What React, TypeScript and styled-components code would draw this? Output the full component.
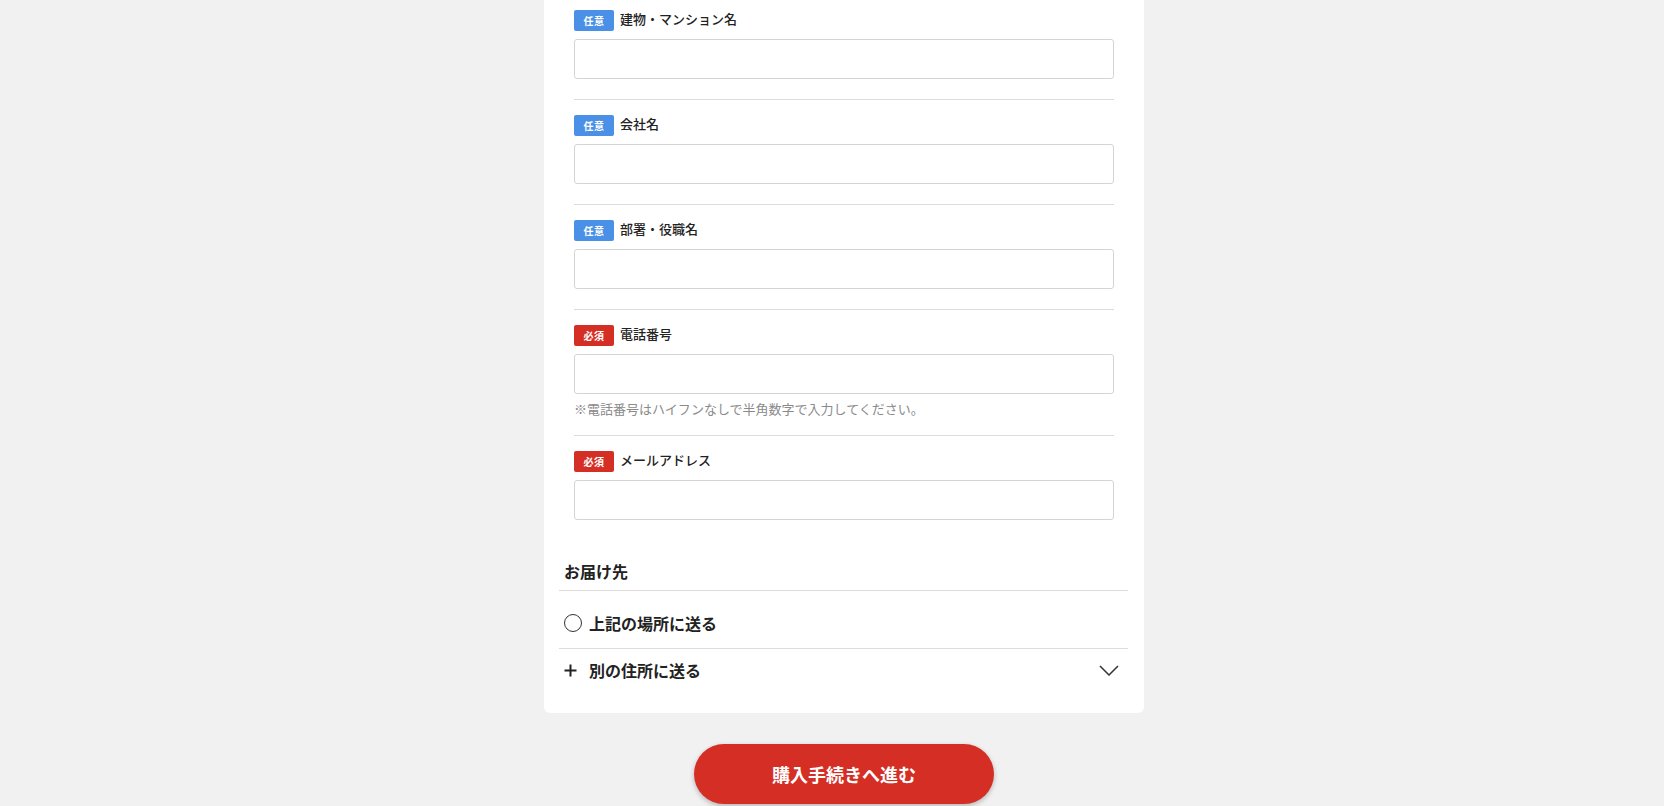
import styled, { createGlobalStyle } from 'styled-components';

const GlobalStyle = createGlobalStyle`
  html, body {
    margin: 0;
    padding: 0;
    background: #f1f1f1;
  }
  body {
    font-family: 'Noto Sans CJK JP', 'Noto Sans', sans-serif;
    color: #222;
  }
  * {
    box-sizing: border-box;
  }
`;

type Field = {
  label: string;
  required?: boolean;
  note?: string;
};

const fields: Field[] = [
  { label: '建物・マンション名' },
  { label: '会社名' },
  { label: '部署・役職名' },
  {
    label: '電話番号',
    required: true,
    note: '※電話番号はハイフンなしで半角数字で入力してください。',
  },
  { label: 'メールアドレス', required: true },
];

function App() {
  return (
    <Page>
      <GlobalStyle />
      <Card>
        {fields.map((f, i) => (
          <FieldRow key={f.label} $first={i === 0} $last={i === fields.length - 1}>
            <LabelLine>
              <Badge $required={f.required}>{f.required ? '必須' : '任意'}</Badge>
              <Label>{f.label}</Label>
            </LabelLine>
            <Input type='text' />
            {f.note && <Note>{f.note}</Note>}
          </FieldRow>
        ))}

        <Delivery>
          <DeliveryTitle>お届け先</DeliveryTitle>
          <Option $first>
            <IconBox>
              <Radio />
            </IconBox>
            <OptionText>上記の場所に送る</OptionText>
          </Option>
          <Option>
            <IconBox>
              <svg width='13' height='13' viewBox='0 0 13 13'>
                <path d='M6.5 0.5v12M0.5 6.5h12' stroke='#222' strokeWidth='2' />
              </svg>
            </IconBox>
            <OptionText>別の住所に送る</OptionText>
            <Chevron width='20' height='11' viewBox='0 0 20 11'>
              <path d='M1 1l9 9 9-9' fill='none' stroke='#333' strokeWidth='1.5' />
            </Chevron>
          </Option>
        </Delivery>
      </Card>

      <SubmitButton type='button'>購入手続きへ進む</SubmitButton>
    </Page>
  );
}

export default App;

const Page = styled.div`
  display: flex;
  flex-direction: column;
  align-items: center;
  padding-left: 24px;
  height: 806px;
  overflow: hidden;
`;

const Card = styled.div`
  width: 600px;
  background: #fff;
  border-radius: 0 0 6px 6px;
  padding: 0 0 22px;
`;

const FieldRow = styled.div<{ $first?: boolean; $last?: boolean }>`
  margin: 0 30px;
  padding: ${(p) => (p.$first ? '10px' : '15px')} 0 20px;
  border-bottom: ${(p) => (p.$last ? 'none' : '1px solid #dcdcdc')};
`;

const LabelLine = styled.div`
  display: flex;
  align-items: center;
  height: 21px;
  margin-bottom: 8px;
`;

const Badge = styled.span<{ $required?: boolean }>`
  display: inline-flex;
  align-items: center;
  justify-content: center;
  width: 40px;
  height: 21px;
  border-radius: 2px;
  background: ${(p) => (p.$required ? '#d42e25' : '#4a90e6')};
  color: #fff;
  font-size: 10px;
  font-weight: 700;
  letter-spacing: 0.5px;
`;

const Label = styled.span`
  margin-left: 6px;
  margin-top: -3px;
  font-size: 13px;
  font-weight: 500;
  line-height: 18px;
  color: #222;
`;

const Input = styled.input`
  display: block;
  width: 100%;
  height: 40px;
  border: 1px solid #d4d4d4;
  border-radius: 3px;
  background: #fff;
  padding: 0 10px;
  font-size: 14px;
  font-family: inherit;
  outline: none;
`;

const Note = styled.p`
  margin: 6px 0 -3px;
  font-size: 13px;
  line-height: 18px;
  color: #8a8a8a;
`;

const Delivery = styled.div`
  margin: 20px 16px 0 15px;
`;

const DeliveryTitle = styled.h3`
  margin: 0;
  padding: 0 5px 8px;
  font-size: 16px;
  font-weight: 700;
  line-height: 22px;
  border-bottom: 1px solid #dcdcdc;
`;

const Option = styled.div<{ $first?: boolean }>`
  display: flex;
  align-items: center;
  padding: ${(p) => (p.$first ? '21px 9px 14px 5px' : '10px 9px 10px 5px')};
  border-bottom: ${(p) => (p.$first ? '1px solid #dcdcdc' : 'none')};
`;

const IconBox = styled.span`
  display: inline-flex;
  align-items: center;
  justify-content: flex-start;
  width: 25px;
  height: 22px;
`;

const Radio = styled.span`
  display: block;
  width: 18px;
  height: 18px;
  border: 1.5px solid #333;
  border-radius: 50%;
`;

const OptionText = styled.span`
  font-size: 16px;
  font-weight: 700;
  line-height: 22px;
  color: #222;
  flex: 1;
`;

const Chevron = styled.svg`
  display: block;
`;

const SubmitButton = styled.button`
  margin-top: 31px;
  width: 300px;
  height: 60px;
  flex-shrink: 0;
  border: none;
  border-radius: 30px;
  background: #d42e25;
  color: #fff;
  font-family: inherit;
  font-size: 18px;
  font-weight: 700;
  box-shadow: 0 2px 5px rgba(0, 0, 0, 0.25);
  cursor: pointer;
`;
